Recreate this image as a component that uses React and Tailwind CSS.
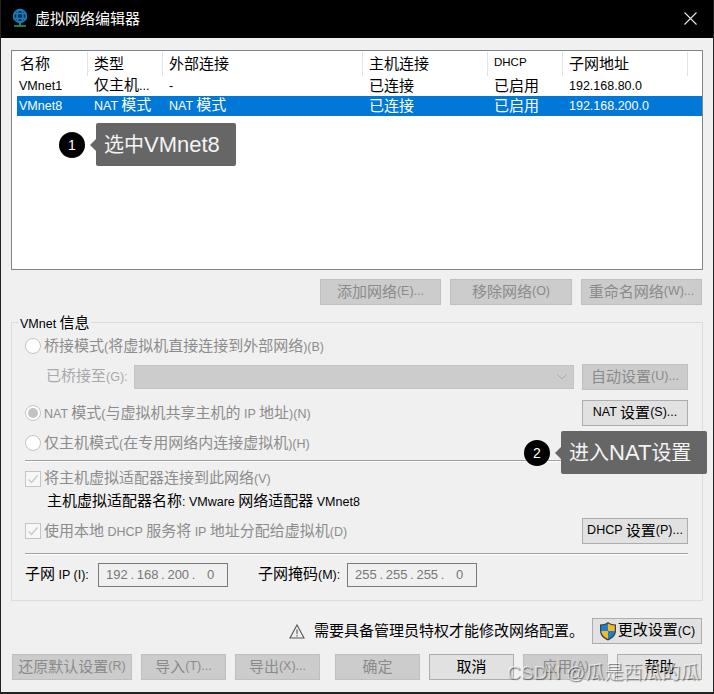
const FONT = 'font-["Liberation_Sans","Noto_Sans_CJK_SC",sans-serif]'

// latin runs sit smaller than the CJK text in this dialog
function T({ children, size = 'text-[12.5px]' }) {
  return String(children)
    .split(/([\x20-\x7e]+)/)
    .map((part, i) =>
      /[\x20-\x7e]/.test(part) ? (
        <span key={i} className={`${size} whitespace-pre`}>{part}</span>
      ) : (
        part
      )
    )
}

function Btn({ w, disabled, children, className = '' }) {
  return (
    <div
      className={`${w} h-[26px] pb-[2px] shrink-0 flex items-center justify-center border whitespace-nowrap ${
        disabled
          ? 'bg-[#cccccc] border-[#bfbfbf] text-[#8a8a8a]'
          : 'bg-[#e1e1e1] border-[#adadad] text-black'
      } ${className}`}
    >
      {typeof children === 'string' ? <T>{children}</T> : children}
    </div>
  )
}

function Radio({ checked }) {
  return (
    <div className="w-[16px] h-[16px] rounded-full border border-[#c4c4c4] bg-white flex items-center justify-center shrink-0">
      {checked && <div className="w-[10px] h-[10px] rounded-full bg-[#c2c2c2]" />}
    </div>
  )
}

function Check() {
  return (
    <div className="w-[16px] h-[16px] border border-[#c4c4c4] bg-[#f7f7f7] shrink-0 flex items-center justify-center">
      <svg width="12" height="12" viewBox="0 0 12 12" fill="none" stroke="#c8c8c8" strokeWidth="1.3">
        <path d="M1.5 6.5 L4.5 9.5 L10.5 2.5" />
      </svg>
    </div>
  )
}

function Callout({ n, text, className, w }) {
  return (
    <div className={`absolute flex items-center ${className}`}>
      <div className="w-[26px] h-[26px] rounded-full bg-black text-white text-[14px] flex items-center justify-center shrink-0">
        {n}
      </div>
      <div className="ml-[5px] w-0 h-0 border-y-[6px] border-y-transparent border-r-[6px] border-r-[#666666]" />
      <div className={`${w} h-[43px] pl-[8px] rounded-[2px] bg-[#666666] text-[#f4f4f4] text-[20px] flex items-center whitespace-nowrap`}>
        <T size="text-[22px]">{text}</T>
      </div>
    </div>
  )
}

const cols = ['w-[71px]', 'w-[75px]', 'w-[200px]', 'w-[125px]', 'w-[75px]', 'w-[125px]']

function ListRow({ cells, selected }) {
  return (
    <div className={`flex h-[20px] pb-[2px] items-center ${selected ? 'bg-[#0078d7] text-white' : 'text-black'}`}>
      {cells.map((c, i) => (
        <div key={i} className={`${cols[i]} shrink-0 whitespace-nowrap ${i === 0 ? 'pl-[2px]' : 'pl-[6px]'}`}>
          <T>{c}</T>
        </div>
      ))}
    </div>
  )
}

function IpBox({ parts, last }) {
  return (
    <div className="w-[130px] h-[24px] pb-[1px] border border-[#7a7a7a] bg-[#f0f0f0] flex items-center pl-[7px] shrink-0 text-[13px] text-[#777777]">
      {parts.map((p) => (
        <span key={p.k} className="flex">
          {p.v}
          <span className="w-[9px] text-center">.</span>
        </span>
      ))}
      <span className="ml-[9px]">{last}</span>
    </div>
  )
}

const ip = [{ k: 'a', v: '192' }, { k: 'b', v: '168' }, { k: 'c', v: '200' }]
const mask = [{ k: 'a', v: '255' }, { k: 'b', v: '255' }, { k: 'c', v: '255' }]

export default function App() {
  return (
    <div className={`${FONT} relative w-[714px] h-[694px] overflow-hidden bg-[#f0f0f0] text-[15px] leading-none text-black border-x border-[#222222] border-b-2`}>
      {/* title bar */}
      <div className="h-[38px] pb-[2px] bg-black flex items-center text-white">
        <svg className="ml-[11px]" width="16" height="20" viewBox="0 0 16 20" fill="none" stroke="#1a7fbd" strokeWidth="1.6">
          <circle cx="8" cy="8" r="6.4" fill="#0a3350" />
          <ellipse cx="8" cy="8" rx="3" ry="6.4" />
          <path d="M1.5 5.5h13M1.5 10.5h13" />
          <path d="M2 18h12" stroke="#1f9a72" strokeWidth="1.6" />
          <path d="M8 15v3" stroke="#1f9a72" />
        </svg>
        <span className="ml-[7px]">虚拟网络编辑器</span>
        <svg className="ml-auto mr-[16px]" width="13" height="13" viewBox="0 0 13 13" stroke="#e8e8e8" strokeWidth="1.1">
          <path d="M.5.5l12 12M12.5.5l-12 12" />
        </svg>
      </div>

      <div className="pl-[10px] pr-[10px]">
        {/* network list */}
        <div className="mt-[12px] w-[692px] h-[220px] border border-[#7f858a] bg-white pl-[5px] pt-[1px]">
          <div className="flex h-[24px] items-stretch">
            {['名称', '类型', '外部连接', '主机连接', 'DHCP', '子网地址'].map((h, i) => (
              <div
                key={h}
                className={`${cols[i]} shrink-0 pb-[2px] ${i === 0 ? 'pl-[3px]' : 'pl-[6px]'} border-r border-[#e3e3e3] flex items-center`}
              >
                <T size="text-[11.5px]">{h}</T>
              </div>
            ))}
          </div>
          <ListRow cells={['VMnet1', '仅主机...', '-', '已连接', '已启用', '192.168.80.0']} />
          <ListRow selected cells={['VMnet8', 'NAT 模式', 'NAT 模式', '已连接', '已启用', '192.168.200.0']} />
        </div>

        {/* list actions */}
        <div className="mt-[9px] flex justify-end gap-[9px] w-[691px]">
          <Btn w="w-[121px]" disabled>添加网络(E)...</Btn>
          <Btn w="w-[122px]" disabled>移除网络(O)</Btn>
          <Btn w="w-[121px]" disabled>重命名网络(W)...</Btn>
        </div>

        {/* VMnet info group */}
        <div className="relative mt-[17px] w-[692px] h-[279px] border border-[#dcdcdc] pl-[13px] pr-[14px]">
          <div className="absolute -top-[8px] left-[7px] bg-[#f0f0f0] px-[1px]">
            <T>VMnet 信息</T>
          </div>

          <div className="mt-[14px] h-[17px] flex items-center text-[#8c8c8c] gap-[3px]">
            <Radio />
            <span><T>桥接模式(将虚拟机直接连接到外部网络)(B)</T></span>
          </div>
          <div className="mt-[10px] h-[26px] flex items-center text-[#a8a8a8]">
            <span className="ml-[21px] w-[88px] pb-[2px] shrink-0 whitespace-nowrap"><T>已桥接至(G):</T></span>
            <div className="w-[440px] h-[24px] bg-[#cccccc] border border-[#c4c4c4] flex items-center justify-end pr-[6px] shrink-0">
              <svg width="10" height="6" viewBox="0 0 10 6" fill="none" stroke="#aaaaaa"><path d="M.5.5L5 5 9.5.5" /></svg>
            </div>
            <Btn w="w-[106px]" disabled className="ml-[8px]">自动设置(U)...</Btn>
          </div>
          <div className="mt-[10px] h-[26px] flex items-center justify-between text-[#8c8c8c]">
            <div className="flex items-center gap-[3px]">
              <Radio checked />
              <span><T>NAT 模式(与虚拟机共享主机的 IP 地址)(N)</T></span>
            </div>
            <Btn w="w-[106px]">NAT 设置(S)...</Btn>
          </div>
          <div className="mt-[8px] h-[17px] flex items-center text-[#8c8c8c] gap-[3px]">
            <Radio />
            <span><T>仅主机模式(在专用网络内连接虚拟机)(H)</T></span>
          </div>
          <div className="mt-[9px] h-[2px] border-t border-[#a0a0a0] bg-white" />
          <div className="mt-[8px] h-[17px] flex items-center text-[#8c8c8c] gap-[3px]">
            <Check />
            <span className="pb-[2px]"><T>将主机虚拟适配器连接到此网络(V)</T></span>
          </div>
          <div className="mt-[6px] ml-[22px] h-[16px] flex items-center whitespace-nowrap">
            <span><T>主机虚拟适配器名称: VMware 网络适配器 VMnet8</T></span>
          </div>
          <div className="mt-[9px] h-[26px] flex items-center justify-between text-[#8c8c8c]">
            <div className="flex items-center gap-[3px]">
              <Check />
              <span><T>使用本地 DHCP 服务将 IP 地址分配给虚拟机(D)</T></span>
            </div>
            <Btn w="w-[106px]">DHCP 设置(P)...</Btn>
          </div>
          <div className="mt-[9px] h-[2px] border-t border-[#a0a0a0] bg-white" />
          <div className="mt-[8px] h-[24px] flex items-center">
            <span className="w-[73px] pb-[2px] shrink-0 whitespace-nowrap"><T>子网 IP (I):</T></span>
            <IpBox parts={ip} last="0" />
            <span className="ml-[30px] w-[89px] pb-[2px] shrink-0 whitespace-nowrap"><T>子网掩码(M):</T></span>
            <IpBox parts={mask} last="0" />
          </div>
        </div>

        {/* admin notice */}
        <div className="mt-[17px] w-[691px] h-[26px] flex items-center justify-end">
          <svg width="16" height="15" viewBox="0 0 16 15" fill="none" stroke="#555555" strokeWidth="1.1">
            <path d="M8 1L15 14H1Z" />
            <path d="M8 5.500v4.500M8 11v1.500" />
          </svg>
          <span className="ml-[9px] mr-[8px] pb-[2px]">需要具备管理员特权才能修改网络配置。</span>
          <Btn w="w-[110px]" className="gap-[1px]">
            <svg className="mt-[2px]" width="18" height="20" viewBox="0 0 18 20">
              <path d="M9 1C6.500 2.800 4 3.400 1 3.500V10c0 4.500 3.500 7.500 8 9.500 4.500-2 8-5 8-9.500V3.500C14 3.400 11.500 2.800 9 1Z" fill="#3a3f4a" />
              <path d="M9 2.500V10H2.200V4.600C4.800 4.400 7 3.800 9 2.500Z" fill="#1d7fd0" />
              <path d="M9 2.500V10h6.800V4.600C13.200 4.400 11 3.800 9 2.500Z" fill="#f5b81f" />
              <path d="M9 10H2.200C2.400 13.500 5.200 16.200 9 18Z" fill="#f5b81f" />
              <path d="M9 10h6.800C15.600 13.500 12.800 16.200 9 18Z" fill="#1d7fd0" />
            </svg>
            <span><T>更改设置(C)</T></span>
          </Btn>
        </div>

        {/* dialog buttons */}
        <div className="mt-[10px] flex w-[691px]">
          <Btn w="w-[120px]" disabled className="ml-[1px]">还原默认设置(R)</Btn>
          <Btn w="w-[85px]" disabled className="ml-[9px]">导入(T)...</Btn>
          <Btn w="w-[85px]" disabled className="ml-[9px]">导出(X)...</Btn>
          <Btn w="w-[85px]" disabled className="ml-[15px]">确定</Btn>
          <Btn w="w-[85px]" className="ml-[9px]">取消</Btn>
          <Btn w="w-[85px]" disabled className="ml-[9px]">应用(A)</Btn>
          <Btn w="w-[85px]" className="ml-[9px]">帮助</Btn>
        </div>
      </div>

      <Callout n="1" text="选中VMnet8" w="w-[140px]" className="left-[58px] top-[123px]" />
      <Callout n="2" text="进入NAT设置" w="w-[146px]" className="left-[523px] top-[431px]" />

      {/* csdn watermark */}
      <div className="absolute left-[506px] top-[663px] text-[19px] whitespace-nowrap text-white/60 [text-shadow:1px_1px_1px_rgba(0,0,0,0.5)]">
        CSDN @瓜是西瓜的瓜
      </div>
    </div>
  )
}
